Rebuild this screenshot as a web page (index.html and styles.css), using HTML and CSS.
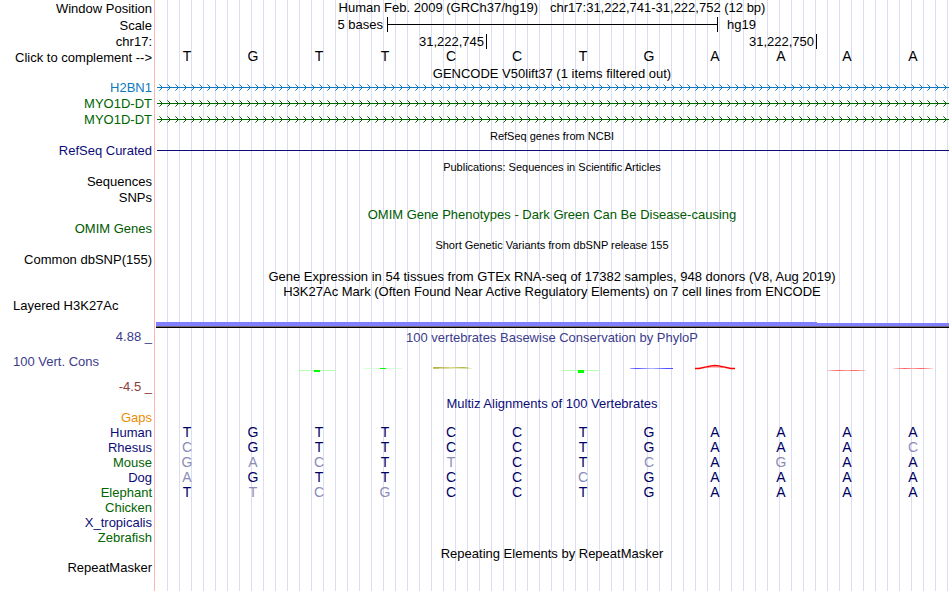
FILE: index.html
```
<!DOCTYPE html>
<html lang="en">
<head>
    <meta charset="UTF-8">
    <meta name="viewport" content="width=device-width, initial-scale=1.0">
    <title>chr17:31,222,741-31,222,752 Genome Browser</title>
    <link rel="stylesheet" href="styles.css">
</head>
<body>
    <main class="browser">
        <!-- Ruler -->
        <div class="row tall">
            <div class="label">Window Position</div>
            <div class="title position"><span>Human Feb. 2009 (GRCh37/hg19)</span><span>chr17:31,222,741-31,222,752 (12 bp)</span></div>
        </div>
        <div class="row tall">
            <div class="label">Scale</div>
            <div class="scale">
                <span class="scale-size">5 bases</span>
                <span class="scale-bar"></span>
                <span class="scale-db">hg19</span>
            </div>
        </div>
        <div class="row medium">
            <div class="label">chr17:</div>
            <div class="ticks">
                <span class="tick">31,222,745</span>
                <span class="tick">31,222,750</span>
            </div>
        </div>
        <div class="row">
            <div class="label"><button type="button" class="complement">Click to complement --&gt;</button></div>
            <div class="bases sequence"><span>T</span><span>G</span><span>T</span><span>T</span><span>C</span><span>C</span><span>T</span><span>G</span><span>A</span><span>A</span><span>A</span><span>A</span></div>
        </div>

        <!-- Genes -->
        <div class="row">
            <div class="label"></div>
            <div class="title">GENCODE V50lift37 (1 items filtered out)</div>
        </div>
        <div class="row medium blue">
            <div class="label">H2BN1</div>
            <svg class="gene" height="16">
                <defs>
                    <pattern id="arrows" width="8" height="16" patternUnits="userSpaceOnUse">
                        <path d="M0 7h8v1h-8z" fill="currentColor" />
                        <path d="M3 5h1v1h-1z M4 6h1v1h-1z M5 7h1v1h-1z M4 8h1v1h-1z M3 9h1v1h-1z" fill="currentColor" />
                        <path d="M2 4h1v1h-1z M2 10h1v1h-1z" fill="currentColor" opacity="0.6" />
                    </pattern>
                </defs>
                <rect width="100%" height="16" fill="url(#arrows)" />
            </svg>
        </div>
        <div class="row medium green">
            <div class="label">MYO1D-DT</div>
            <svg class="gene" height="16">
                <defs>
                    <pattern id="arrows2" width="8" height="16" patternUnits="userSpaceOnUse">
                        <path d="M0 7h8v1h-8z" fill="currentColor" />
                        <path d="M3 5h1v1h-1z M4 6h1v1h-1z M5 7h1v1h-1z M4 8h1v1h-1z M3 9h1v1h-1z" fill="currentColor" />
                        <path d="M2 4h1v1h-1z M2 10h1v1h-1z" fill="currentColor" opacity="0.6" />
                    </pattern>
                </defs>
                <rect width="100%" height="16" fill="url(#arrows2)" />
            </svg>
        </div>
        <div class="row medium green">
            <div class="label">MYO1D-DT</div>
            <svg class="gene" height="16">
                <rect width="100%" height="16" fill="url(#arrows2)" />
            </svg>
        </div>
        <div class="row">
            <div class="label"></div>
            <div class="title small">RefSeq genes from NCBI</div>
        </div>
        <div class="row medium navy">
            <div class="label">RefSeq Curated</div>
            <div class="intron"></div>
        </div>

        <!-- Literature and variants -->
        <div class="row">
            <div class="label"></div>
            <div class="title small">Publications: Sequences in Scientific Articles</div>
        </div>
        <div class="row medium">
            <div class="label">Sequences</div>
        </div>
        <div class="row medium">
            <div class="label">SNPs</div>
        </div>
        <div class="row omim">
            <div class="label"></div>
            <div class="title">OMIM Gene Phenotypes - Dark Green Can Be Disease-causing</div>
        </div>
        <div class="row medium omim">
            <div class="label">OMIM Genes</div>
        </div>
        <div class="row">
            <div class="label"></div>
            <div class="title small">Short Genetic Variants from dbSNP release 155</div>
        </div>
        <div class="row medium">
            <div class="label">Common dbSNP(155)</div>
        </div>

        <!-- Expression and regulation -->
        <div class="row">
            <div class="label"></div>
            <div class="title">Gene Expression in 54 tissues from GTEx RNA-seq of 17382 samples, 948 donors (V8, Aug 2019)</div>
        </div>
        <div class="row">
            <div class="label"></div>
            <div class="title">H3K27Ac Mark (Often Found Near Active Regulatory Elements) on 7 cell lines from ENCODE</div>
        </div>
        <div class="row histone">
            <div class="label left">Layered H3K27Ac</div>
            <div class="signal"><span class="high"></span><span class="low"></span></div>
        </div>

        <!-- Conservation -->
        <div class="row conservation">
            <div class="label range">
                <span>4.88 _</span>
                <span class="range-name">100 Vert. Cons</span>
                <span class="range-min">-4.5 _</span>
            </div>
            <div class="wiggle">
                <div class="title">100 vertebrates Basewise Conservation by PhyloP</div>
                <svg height="20" viewBox="0 0 794 20" preserveAspectRatio="none">
                    <defs>
                        <linearGradient id="olive">
                            <stop offset="0" stop-color="#b8b84c" />
                            <stop offset="0.15" stop-color="#b4b440" />
                            <stop offset="0.5" stop-color="#dcdca0" />
                            <stop offset="0.85" stop-color="#b4b440" />
                            <stop offset="1" stop-color="#b4b440" stop-opacity="0.3" />
                        </linearGradient>
                        <linearGradient id="blue">
                            <stop offset="0" stop-color="#5050ff" stop-opacity="0.5" />
                            <stop offset="0.15" stop-color="#5050ff" />
                            <stop offset="0.5" stop-color="#b8b8ff" />
                            <stop offset="0.85" stop-color="#5050ff" />
                            <stop offset="1" stop-color="#5050ff" />
                        </linearGradient>
                        <linearGradient id="red">
                            <stop offset="0" stop-color="#ff5050" stop-opacity="0.2" />
                            <stop offset="0.3" stop-color="#ff6060" />
                            <stop offset="0.5" stop-color="#ffa0a0" />
                            <stop offset="0.7" stop-color="#ff6060" />
                            <stop offset="1" stop-color="#ff5050" stop-opacity="0.2" />
                        </linearGradient>
                    </defs>
                    <rect x="143" y="10" width="38" height="1" fill="#b4ffb4" />
                    <rect x="159" y="10" width="6" height="2" fill="#00ff00" />
                    <rect x="209" y="8" width="38" height="1" fill="#d8ffd8" />
                    <rect x="225" y="8" width="6" height="1" fill="#00ff00" />
                    <rect x="278" y="7" width="6" height="2" fill="#c4c468" />
                    <rect x="278" y="7" width="36" height="1" fill="url(#olive)" />
                    <rect x="284" y="8" width="33" height="1" fill="url(#olive)" opacity="0.5" />
                    <rect x="407" y="10" width="38" height="1" fill="#b4ffb4" />
                    <rect x="423" y="10" width="6" height="3" fill="#00ff00" />
                    <rect x="475" y="8" width="43" height="1" fill="url(#blue)" />
                    <path d="M540 8.5h4L556 6l4-.5 4 .5 12 2.5h4" fill="none" stroke="#ff0000" stroke-width="1.4" />
                    <path d="M550 7.7l6-.7h8l6 .7" fill="none" stroke="#ff6060" stroke-width="0.8" />
                    <rect x="672" y="10" width="39" height="1" fill="url(#red)" />
                    <rect x="738" y="8" width="40" height="1" fill="url(#red)" />
                </svg>
            </div>
        </div>

        <!-- Alignments -->
        <div class="row navy">
            <div class="label"></div>
            <div class="title">Multiz Alignments of 100 Vertebrates</div>
        </div>
        <div class="row gaps">
            <div class="label">Gaps</div>
        </div>
        <div class="row navy">
            <div class="label">Human</div>
            <div class="bases"><span>T</span><span>G</span><span>T</span><span>T</span><span>C</span><span>C</span><span>T</span><span>G</span><span>A</span><span>A</span><span>A</span><span>A</span></div>
        </div>
        <div class="row navy">
            <div class="label">Rhesus</div>
            <div class="bases"><span class="diff">C</span><span>G</span><span>T</span><span>T</span><span>C</span><span>C</span><span>T</span><span>G</span><span>A</span><span>A</span><span>A</span><span class="diff">C</span></div>
        </div>
        <div class="row green">
            <div class="label">Mouse</div>
            <div class="bases"><span class="diff">G</span><span class="diff">A</span><span class="diff">C</span><span>T</span><span class="diff">T</span><span>C</span><span>T</span><span class="diff">C</span><span>A</span><span class="diff">G</span><span>A</span><span>A</span></div>
        </div>
        <div class="row navy">
            <div class="label">Dog</div>
            <div class="bases"><span class="diff">A</span><span>G</span><span>T</span><span>T</span><span>C</span><span>C</span><span class="diff">C</span><span>G</span><span>A</span><span>A</span><span>A</span><span>A</span></div>
        </div>
        <div class="row green">
            <div class="label">Elephant</div>
            <div class="bases"><span>T</span><span class="diff">T</span><span class="diff">C</span><span class="diff">G</span><span>C</span><span>C</span><span>T</span><span>G</span><span>A</span><span>A</span><span>A</span><span>A</span></div>
        </div>
        <div class="row green">
            <div class="label">Chicken</div>
        </div>
        <div class="row navy">
            <div class="label">X_tropicalis</div>
        </div>
        <div class="row green">
            <div class="label">Zebrafish</div>
        </div>

        <!-- Repeats -->
        <div class="row">
            <div class="label"></div>
            <div class="title">Repeating Elements by RepeatMasker</div>
        </div>
        <div class="row last">
            <div class="label">RepeatMasker</div>
        </div>
    </main>
</body>
</html>
```
FILE: styles.css
```
body {
    margin: 0;
    background-color: #fff;
    color: #000;
    font-family: "Liberation Sans", Arial, Helvetica, sans-serif;
    font-size: 13px;
    line-height: 15px;
}

.browser {
    display: flex;
    flex-direction: column;
    min-height: 100vh;
    padding-right: 1px;
    box-sizing: border-box;
}

/* one track line: label on the left, drawing over the guide lines on the right */
.row {
    display: grid;
    grid-template-columns: 155px 1fr;
    min-height: 15px;
    white-space: nowrap;
    background: repeating-linear-gradient(to right, #dcdcf5 0, #dcdcf5 1px, transparent 1px, transparent 12px) 167px 0 no-repeat;
}

.medium {
    min-height: 16px;
    line-height: 16px;
}

.tall {
    min-height: 17px;
    line-height: 17px;
}

.last {
    flex: 1;
}

.label {
    padding: 0 2px 0 13px;
    border-right: 1px solid #ffb4b4;
    text-align: right;
}

.label.left {
    text-align: left;
}

.title {
    height: 15px;
    line-height: 17px;
    text-align: center;
}

.small {
    font-size: 11px;
}

.position {
    display: flex;
    justify-content: center;
    gap: 12px;
    line-height: 15px;
}

.complement {
    padding: 0;
    border: none;
    background: none;
    color: inherit;
    font: inherit;
    cursor: pointer;
}

/* track colours */
.blue {
    color: #0c78bf;
}

.green {
    color: #006400;
}

.navy {
    color: #0c0c78;
}

.omim {
    color: #005a00;
}

.gaps {
    color: #ee8c00;
}

/* ruler */
.scale {
    display: grid;
    grid-template-columns: 232fr 331fr 231fr;
    line-height: 15px;
}

.scale-size {
    padding-right: 4px;
    text-align: right;
}

.scale-bar {
    height: 15px;
    box-sizing: border-box;
    border: solid #000;
    border-width: 0 1px;
    background: linear-gradient(#000, #000) 0 7px / 100% 1px no-repeat;
}

.scale-db {
    padding-left: 9px;
}

.ticks {
    display: grid;
    grid-template-columns: 332fr 330fr 132fr;
}

.tick {
    height: 15px;
    padding-right: 2px;
    border-right: 1px solid #000;
    text-align: right;
}

.bases {
    display: grid;
    grid-template-columns: repeat(12, 1fr);
    height: 15px;
    margin-left: -1px;
    padding-right: 3px;
    color: #000064;
    font-size: 14px;
    text-align: center;
}

.sequence {
    color: #000;
    line-height: 13px;
}

.diff {
    color: #8c8cb8;
}

/* items */
.gene {
    display: block;
    width: calc(100% - 2px);
    margin-left: 2px;
}

.intron {
    height: 1px;
    margin: 7px 0 0 2px;
    background-color: #0c0c78;
}

.histone {
    min-height: 31px;
}

.signal {
    display: grid;
    grid-template-columns: 661fr 132fr;
    align-items: end;
    align-self: end;
    margin: 0 0 1px 1px;
    border-bottom: 1px solid #000;
}

.high,
.low {
    height: 4px;
    border-bottom: 1px solid #786478;
    background-color: #8080ff;
}

.low {
    height: 3px;
}

.conservation {
    min-height: 66px;
    color: #3c3c8c;
}

.range {
    display: flex;
    flex-direction: column;
    justify-content: space-between;
    padding-bottom: 1px;
}

.range-name {
    text-align: left;
}

.range-min {
    color: #8c3c3c;
}

.wiggle {
    display: flex;
    flex-direction: column;
    gap: 16px;
}

.wiggle svg {
    display: block;
    width: 100%;
}
```
